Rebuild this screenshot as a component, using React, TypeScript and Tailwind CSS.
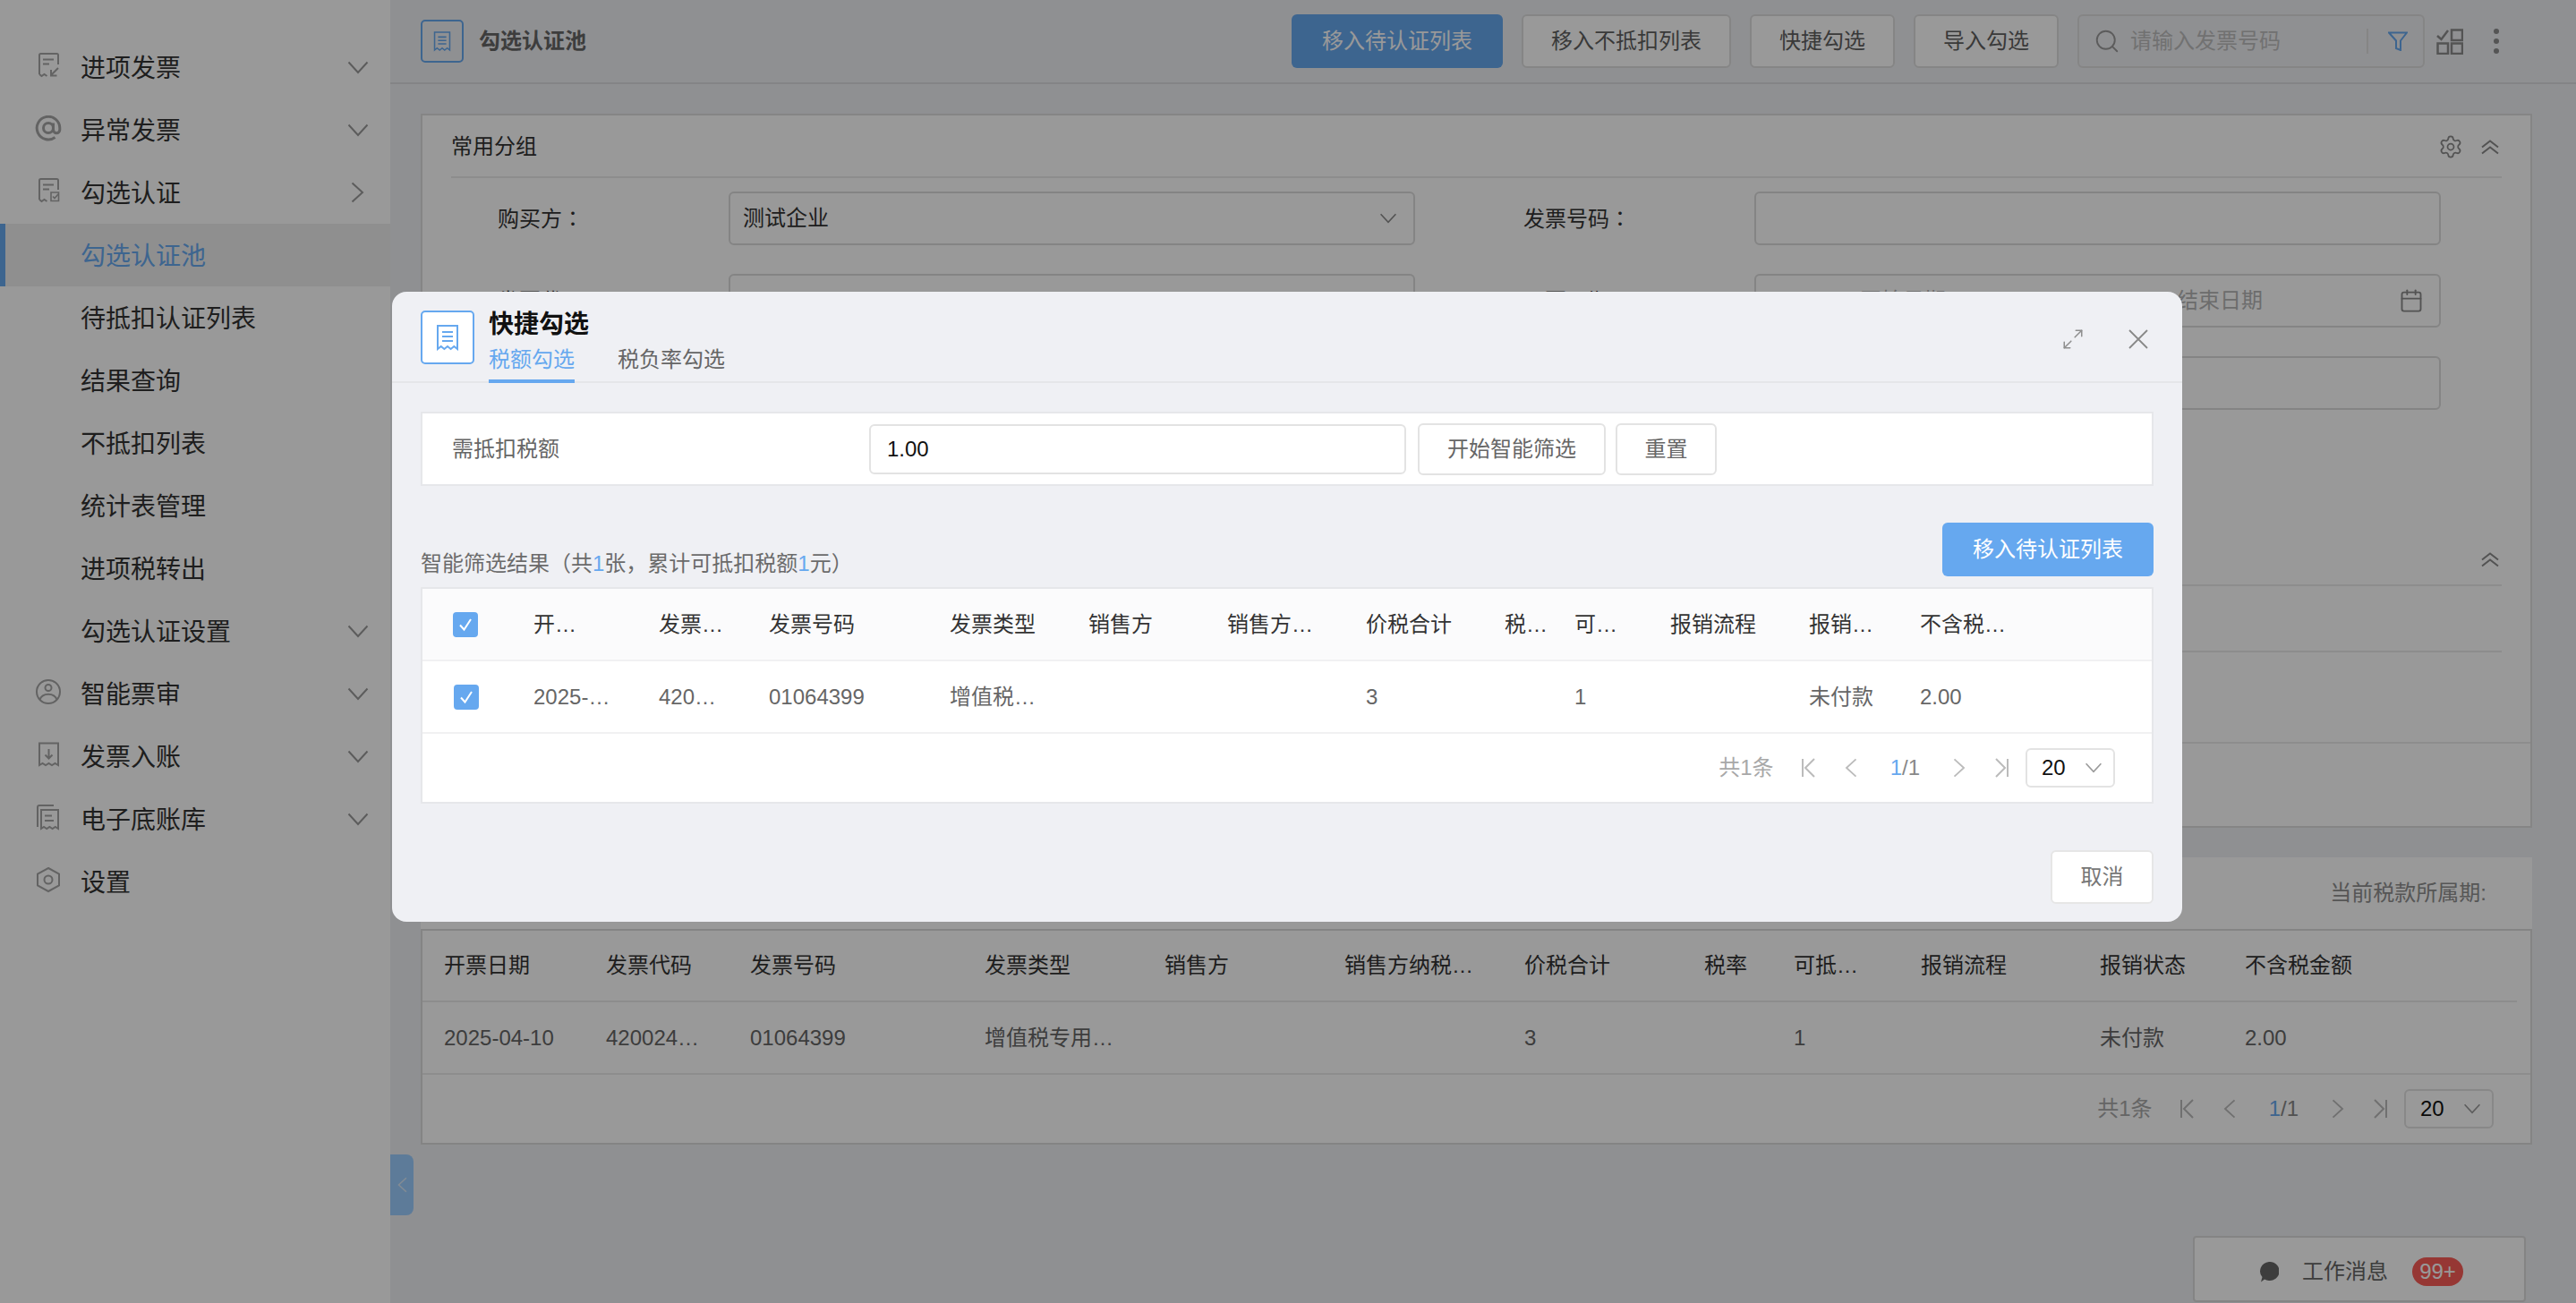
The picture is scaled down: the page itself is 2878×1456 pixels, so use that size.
import { Calendar, Maximize2, Search, Settings } from "lucide-react"
import type { ReactNode } from "react"

const Chevron = ({ dir, className }: { dir: "up" | "down" | "left" | "right"; className?: string }) => {
  const paths = {
    down: { w: 24, h: 15, d: "M1.5 1.5 L12 13 L22.5 1.5" },
    up: { w: 24, h: 15, d: "M1.5 13.5 L12 2 L22.5 13.5" },
    left: { w: 15, h: 24, d: "M13.5 1.5 L2 12 L13.5 22.5" },
    right: { w: 15, h: 24, d: "M1.5 1.5 L13 12 L1.5 22.5" },
  }[dir]
  return (
    <svg viewBox={`0 0 ${paths.w} ${paths.h}`} width={paths.w} height={paths.h} fill="none" stroke="currentColor" strokeWidth="2" className={className}>
      <path d={paths.d} />
    </svg>
  )
}

const DoubleUp = () => (
  <svg viewBox="0 0 20 17" width="20" height="17" fill="none" stroke="#8a8a8a" strokeWidth="2">
    <path d="M1 8.5 L10 1.5 L19 8.5 M1 15.5 L10 8.5 L19 15.5" />
  </svg>
)

// small receipt with the zigzag bottom, used in both title boxes
const ReceiptGlyph = ({ w, h, color }: { w: number; h: number; color: string }) => (
  <svg viewBox="0 0 26 30" width={w} height={h} fill="none" stroke={color} strokeWidth="2">
    <path d="M2 2 H24 V28 L20.3 25 L16.6 28 L13 25 L9.4 28 L5.7 25 L2 28 Z" />
    <path d="M7 9 H19 M7 14 H19 M7 19 H19" />
  </svg>
)

const SideIcon = ({ children }: { children: ReactNode }) => (
  <svg viewBox="0 0 30 30" width="30" height="30" fill="none" stroke="#a6a6a6" strokeWidth="2" className="shrink-0 mt-[-2px]">
    {children}
  </svg>
)

const receiptBase = (
  <>
    <path d="M5 24 V2.5 Q5 1 6.5 1 H24.5 Q26 1 26 2.5 V13" />
    <path d="M9 7.5 H21 M9 12.5 H16" />
    <path d="M5 24 L7.5 26 L10.5 24 L13.5 26" />
  </>
)

const icons: Record<string, ReactNode> = {
  in: (
    <SideIcon>
      {receiptBase}
      <path d="M26 17 L18 25 M18 19 V25.5 H24.5" />
    </SideIcon>
  ),
  at: (
    <SideIcon>
      <g strokeWidth="3">
        <circle cx="15" cy="14" r="5.5" />
        <path d="M20.5 8.5 V16 A3.6 3.6 0 0 0 27.8 16 V14 A12.8 12.8 0 1 0 22.5 24.5" />
      </g>
    </SideIcon>
  ),
  check: (
    <SideIcon>
      {receiptBase}
      <path d="M18 16 H26.5 V25.5 H18 Z" strokeWidth="1.6" />
      <path d="M20 20.5 L22 22.5 L26 18" strokeWidth="1.6" />
    </SideIcon>
  ),
  user: (
    <SideIcon>
      <circle cx="15" cy="14" r="13" />
      <circle cx="15" cy="9.5" r="3.5" />
      <path d="M5.5 23 C7 18.5 11 16.8 15 16.8 C19 16.8 23 18.5 24.5 23" />
    </SideIcon>
  ),
  down: (
    <SideIcon>
      <path d="M5 26 V1.5 H26 V26 L22.5 24 L19 26 L15.5 24 L12 26 L8.5 24 Z" />
      <path d="M15.5 8 V18 M11.5 14.5 L15.5 18.5 L19.5 14.5" />
    </SideIcon>
  ),
  copy: (
    <SideIcon>
      <path d="M3 25 V3 Q3 1 5 1 H21" />
      <path d="M7 27 V6 H26 V27 L22.8 25 L19.6 27 L16.4 25 L13.2 27 L10 25 Z" />
      <path d="M11 12.5 H19 M11 18 H21" />
    </SideIcon>
  ),
  gear: (
    <SideIcon>
      <path d="M15 1 L27 7.5 V20.5 L15 27 L3 20.5 V7.5 Z" />
      <circle cx="15" cy="14" r="4.5" />
    </SideIcon>
  ),
}

const menu: { label: string; icon?: string; arrow?: "down" | "right"; active?: boolean }[] = [
  { label: "进项发票", icon: "in", arrow: "down" },
  { label: "异常发票", icon: "at", arrow: "down" },
  { label: "勾选认证", icon: "check", arrow: "right" },
  { label: "勾选认证池", active: true },
  { label: "待抵扣认证列表" },
  { label: "结果查询" },
  { label: "不抵扣列表" },
  { label: "统计表管理" },
  { label: "进项税转出" },
  { label: "勾选认证设置", arrow: "down" },
  { label: "智能票审", icon: "user", arrow: "down" },
  { label: "发票入账", icon: "down", arrow: "down" },
  { label: "电子底账库", icon: "copy", arrow: "down" },
  { label: "设置", icon: "gear" },
]

const Sidebar = () => (
  <aside className="w-[436px] shrink-0 bg-white pt-[40px]">
    {menu.map((item) => (
      <div
        key={item.label}
        className={`h-[70px] flex items-center text-[28px] ${
          item.active ? "bg-[#eeeeee] border-l-[6px] border-[#66a8ef] pl-[84px] text-[#66a8ef]" : "text-[#333333] pl-[39px]"
        }`}
      >
        {!item.active && (item.icon ? <div className="w-[51px] shrink-0">{icons[item.icon]}</div> : <div className="w-[51px] shrink-0" />)}
        <span className="pt-[3px]">{item.label}</span>
        {item.arrow === "down" && <Chevron dir="down" className="ml-auto mr-[24px] text-[#9a9a9a]" />}
        {item.arrow === "right" && <Chevron dir="right" className="ml-auto mr-[29px] text-[#9a9a9a]" />}
      </div>
    ))}
  </aside>
)

const Pager = () => (
  <div className="h-[76px] flex items-center justify-end pr-[41px] text-[24px]">
    <span className="text-[#a8a8a8]">共1条</span>
    <svg viewBox="0 0 16 22" width="16" height="22" fill="none" stroke="#bbbbbb" strokeWidth="2" className="ml-[30px]">
      <path d="M2 1 V21 M15 1 L5 11 L15 21" />
    </svg>
    <Chevron dir="left" className="ml-[32px] w-[16px] h-[22px] text-[#bbbbbb]" />
    <span className="ml-[36px] text-[#888888]">
      <span className="text-[#66a8ef]">1</span>/1
    </span>
    <Chevron dir="right" className="ml-[36px] w-[16px] h-[22px] text-[#bbbbbb]" />
    <svg viewBox="0 0 16 22" width="16" height="22" fill="none" stroke="#bbbbbb" strokeWidth="2" className="ml-[32px]">
      <path d="M14 1 V21 M1 1 L11 11 L1 21" />
    </svg>
    <div className="ml-[18px] w-[100px] h-[44px] border-2 border-[#e3e3e3] rounded-[6px] bg-white flex items-center pl-[16px] text-[#111111]">
      20
      <Chevron dir="down" className="ml-auto mr-[12px] w-[20px] h-[12px] text-[#999999]" />
    </div>
  </div>
)

const CheckBox = ({ className }: { className: string }) => (
  <div className={`w-[28px] h-[28px] rounded-[4px] bg-[#66a8ef] flex items-center justify-center ${className}`}>
    <svg viewBox="0 0 18 18" width="18" height="18" fill="none" stroke="white" strokeWidth="2">
      <path d="M3 9.5 L7.5 14.5 L15 3" />
    </svg>
  </div>
)

const modalHead = ["开…", "发票…", "发票号码", "发票类型", "销售方", "销售方…", "价税合计", "税…", "可…", "报销流程", "报销…", "不含税…"]
const modalRow = ["2025-…", "420…", "01064399", "增值税…", "", "", "3", "", "1", "", "未付款", "2.00"]
const pageHead = ["开票日期", "发票代码", "发票号码", "发票类型", "销售方", "销售方纳税…", "价税合计", "税率", "可抵…", "报销流程", "报销状态", "不含税金额"]
const pageRow = ["2025-04-10", "420024…", "01064399", "增值税专用…", "", "", "3", "", "1", "", "未付款", "2.00"]

const ModalTable = () => (
  <div className="mt-[12px] border-2 border-[#e6e7ea] bg-white text-[24px]">
    <div className="h-[81px] border-b-2 border-[#f1f1f2] bg-[#fbfbfc] text-[#333333] grid grid-cols-[124px_140px_123px_202px_155px_155px_155px_155px_78px_107px_155px_124px_1fr] items-center">
      <CheckBox className="ml-[34px]" />
      {modalHead.map((t) => (
        <span key={t}>{t}</span>
      ))}
    </div>
    <div className="h-[81px] border-b-2 border-[#f1f1f2] text-[#666666] grid grid-cols-[124px_140px_123px_202px_155px_155px_155px_155px_78px_107px_155px_124px_1fr] items-center">
      <CheckBox className="ml-[35px]" />
      {modalRow.map((t, i) => (
        <span key={i}>{t}</span>
      ))}
    </div>
    <Pager />
  </div>
)

const PageTable = () => (
  <div className="border-2 border-[#dcdcdc] bg-white text-[24px]">
    <div className="h-[80px] mr-[15px] border-b-2 border-[#ececec] text-[#333333] pl-[24px] grid grid-cols-[181px_161px_262px_201px_201px_201px_201px_100px_142px_200px_162px_1fr] items-center">
      {pageHead.map((t) => (
        <span key={t}>{t}</span>
      ))}
    </div>
    <div className="h-[81px] border-b-2 border-[#ececec] text-[#666666] pl-[24px] grid grid-cols-[181px_161px_262px_201px_201px_201px_201px_100px_142px_200px_162px_1fr] items-center">
      {pageRow.map((t, i) => (
        <span key={i}>{t}</span>
      ))}
    </div>
    <Pager />
  </div>
)

const TopButton = ({ children, w }: { children: ReactNode; w: string }) => (
  <button className={`${w} h-[60px] shrink-0 bg-white border-2 border-[#dedede] rounded-[6px] text-[24px] text-[#5f5f5f]`}>{children}</button>
)

const Header = () => (
  <header className="h-[94px] border-b-2 border-[#dcdde0] pl-[34px] pr-[86px] flex items-center">
    <div className="w-[48px] h-[48px] border-2 border-[#66a8ef] rounded-[5px] flex items-center justify-center">
      <ReceiptGlyph w={20} h={26} color="#66a8ef" />
    </div>
    <span className="ml-[17px] text-[24px] font-bold text-[#666666]">勾选认证池</span>
    <div className="ml-auto flex items-center gap-[21px]">
      <button className="w-[236px] h-[60px] bg-[#66a8ef] rounded-[6px] text-[24px] text-white">移入待认证列表</button>
      <TopButton w="w-[234px]">移入不抵扣列表</TopButton>
      <TopButton w="w-[162px]">快捷勾选</TopButton>
      <TopButton w="w-[162px]">导入勾选</TopButton>
      <div className="w-[388px] h-[60px] border-2 border-[#dedede] rounded-[6px] flex items-center pl-[16px] text-[24px] text-[#bdbdbd]">
        <Search size={30} strokeWidth={1.5} className="text-[#999999]" />
        <span className="ml-[11px]">请输入发票号码</span>
        <div className="ml-auto w-[2px] h-[28px] bg-[#dedede]" />
        <svg viewBox="0 0 22 22" width="22" height="22" fill="none" stroke="#66a8ef" strokeWidth="2" className="ml-[22px] mr-[17px]">
          <path d="M1 1.5 H21 L14 10.5 V21 L9 19 V10.5 Z" />
        </svg>
      </div>
    </div>
    <svg viewBox="0 0 30 29" width="30" height="29" fill="none" stroke="#8c8c8c" strokeWidth="2.5" className="ml-[13px]">
      <path d="M1 8 L5.5 12 L13 2" />
      <rect x="17" y="1.5" width="12" height="11.5" />
      <rect x="1.5" y="16.5" width="11.5" height="11.5" />
      <rect x="17" y="16.5" width="12" height="11.5" />
    </svg>
    <div className="ml-[34px] flex flex-col gap-[5px]">
      <div className="w-[6px] h-[6px] rounded-full bg-[#8c8c8c]" />
      <div className="w-[6px] h-[6px] rounded-full bg-[#8c8c8c]" />
      <div className="w-[6px] h-[6px] rounded-full bg-[#8c8c8c]" />
    </div>
  </header>
)

const FieldBox = ({ children, className = "" }: { children?: ReactNode; className?: string }) => (
  <div className={`w-[767px] h-[60px] border-2 border-[#dcdcdc] rounded-[6px] flex items-center shrink-0 ${className}`}>{children}</div>
)

// the TC cut centres the full-width colon, as the reference draws it
const FieldLabel = ({ text, className = "" }: { text: string; className?: string }) => (
  <span className={`w-[258px] shrink-0 ${className}`}>
    {text}
    <span className="font-[Noto_Sans_CJK_TC,sans-serif]">：</span>
  </span>
)

const FilterCard = () => (
  <section className="h-[798px] border-2 border-[#dedede] bg-white flex flex-col text-[24px] text-[#333333]">
    <div className="h-[70px] mx-[32px] border-b-2 border-[#ececec] flex items-center pt-[2px]">
      <span>常用分组</span>
      <Settings size={28} strokeWidth={1.5} className="ml-auto mr-[20px] text-[#8a8a8a]" />
      <div className="mr-[3px]">
        <DoubleUp />
      </div>
    </div>
    <div className="pl-[84px] pt-[15px] flex flex-col gap-[32px]">
      <div className="flex items-center">
        <FieldLabel text="购买方" />
        <FieldBox className="pl-[14px]">
          测试企业
          <Chevron dir="down" className="ml-auto mr-[18px] w-[20px] h-[12px] text-[#8a8a8a]" />
        </FieldBox>
        <FieldLabel text="发票号码" className="ml-[121px]" />
        <FieldBox />
      </div>
      <div className="flex items-center">
        <FieldLabel text="发票代码" />
        <FieldBox />
        <FieldLabel text="开票日期" className="ml-[121px]" />
        <FieldBox className="text-[#b5b5b5]">
          <span className="ml-[116px]">开始日期</span>
          <span className="ml-[126px]">~</span>
          <span className="ml-[118px]">结束日期</span>
          <Calendar size={28} strokeWidth={1.6} className="ml-auto mr-[17px] text-[#8a8a8a]" />
        </FieldBox>
      </div>
      <div className="flex items-center">
        <span className="w-[258px] shrink-0" />
        <FieldBox />
        <span className="w-[258px] ml-[121px] shrink-0" />
        <FieldBox />
      </div>
    </div>
    <div className="mt-[123px] h-[74px] mx-[32px] border-b-2 border-[#ececec] flex items-center justify-end pr-[3px] pt-[16px]">
      <DoubleUp />
    </div>
    <div className="h-[74px] mx-[32px] border-b-2 border-[#ececec]" />
    <div className="mt-[100px] border-b-2 border-[#ececec]" />
  </section>
)

const QuickPickModal = () => (
  <div className="absolute left-[438px] top-[326px] w-[2000px] h-[704px] rounded-[16px] bg-[#eff0f4] text-[24px]">
    <div className="h-[102px] border-b-2 border-[#e5e6e9] px-[32px] flex items-start">
      <div className="mt-[21px] w-[60px] h-[60px] border-2 border-[#66a8ef] rounded-[5px] bg-white flex items-center justify-center">
        <ReceiptGlyph w={26} h={30} color="#66a8ef" />
      </div>
      <div className="ml-[16px] pt-[14px]">
        <div className="h-[42px] leading-[46px] text-[28px] font-bold text-[#111111]">快捷勾选</div>
        <div className="flex gap-[48px]">
          <div className="h-[46px] leading-[40px] border-b-4 border-[#66a8ef] text-[#66a8ef]">税额勾选</div>
          <div className="h-[46px] leading-[40px] text-[#666666]">税负率勾选</div>
        </div>
      </div>
      <div className="ml-auto mr-[5px] mt-[40px] flex items-center gap-[48px]">
        <Maximize2 size={26} strokeWidth={1.4} className="text-[#8f8f8f]" />
        <svg viewBox="0 0 24 24" width="24" height="24" fill="none" stroke="#888888" strokeWidth="1.8">
          <path d="M2 2 L22 22 M22 2 L2 22" />
        </svg>
      </div>
    </div>
    <div className="px-[32px]">
      <div className="mt-[32px] h-[83px] border-2 border-[#e6e7ea] bg-white flex items-center pl-[33px] text-[#666666]">
        <span className="w-[466px] shrink-0">需抵扣税额</span>
        <div className="w-[600px] h-[56px] border-2 border-[#e3e3e3] rounded-[6px] flex items-center pl-[18px] text-[#111111]">1.00</div>
        <button className="ml-[13px] w-[210px] h-[58px] border-2 border-[#e3e3e3] rounded-[6px] text-[#666666]">开始智能筛选</button>
        <button className="ml-[11px] w-[113px] h-[58px] border-2 border-[#e3e3e3] rounded-[6px] text-[#666666]">重置</button>
      </div>
      <div className="mt-[41px] flex items-end justify-between">
        <span className="leading-[28px] text-[#6b6b6b]">
          智能筛选结果（共<span className="text-[#66a8ef]">1</span>张，累计可抵扣税额<span className="text-[#66a8ef]">1</span>元）
        </span>
        <button className="w-[236px] h-[60px] bg-[#66a8ef] rounded-[6px] text-white">移入待认证列表</button>
      </div>
      <ModalTable />
      <div className="mt-[52px] flex justify-end">
        <button className="w-[115px] h-[60px] bg-white border-2 border-[#e6e6e6] rounded-[6px] text-[#777777]">取消</button>
      </div>
    </div>
  </div>
)

export default function App() {
  return (
    <div className="relative w-screen h-screen overflow-hidden flex bg-[#eff0f4] font-[Liberation_Sans,Noto_Sans_CJK_SC,sans-serif]">
      <Sidebar />
      <main className="flex-1 min-w-0">
        <Header />
        <div className="pt-[33px] pl-[34px] pr-[49px]">
          <FilterCard />
          <div className="mt-[33px] h-[80px] bg-white flex items-center justify-end pr-[51px] text-[24px] text-[#8f8f8f]">当前税款所属期:</div>
          <PageTable />
        </div>
      </main>

      {/* collapse tab and message box float over the page */}
      <div className="absolute left-[436px] top-[1290px] w-[26px] h-[68px] rounded-r-[8px] bg-[#9cceff] flex items-center justify-center">
        <Chevron dir="left" className="w-[11px] h-[20px] text-[#dbe9f7]" />
      </div>
      <div className="absolute left-[2450px] top-[1381px] w-[372px] h-[74px] bg-white border-2 border-[#dcdcdc] rounded-[4px] flex items-center pl-[72px] pt-[6px] text-[24px] text-[#666666]">
        <svg viewBox="0 0 22 23" width="22" height="23">
          <path d="M11 0 A11 10.5 0 1 1 6 19.5 L2 22.5 L3.5 17 A11 10.5 0 0 1 11 0 Z" fill="#666666" />
        </svg>
        <span className="ml-[26px]">工作消息</span>
        <span className="ml-[27px] w-[57px] h-[32px] rounded-full bg-[#fa5d57] text-white flex items-center justify-center">99+</span>
      </div>

      <div className="absolute inset-0 bg-black/40">
        <QuickPickModal />
      </div>
    </div>
  )
}
